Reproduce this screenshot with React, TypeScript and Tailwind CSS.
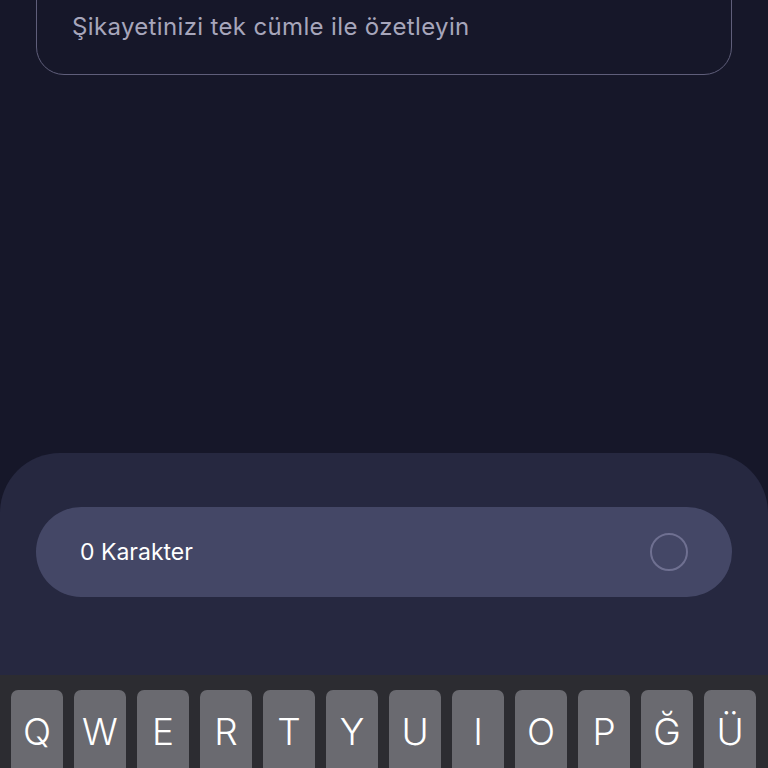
import React from 'react';

const keys = ['Q', 'W', 'E', 'R', 'T', 'Y', 'U', 'I', 'O', 'P', 'Ğ', 'Ü'];

const SummaryInput = () => (
  <div className="px-[36px]">
    <div className="mt-[-30px] h-[105px] rounded-[28px] border-[1.5px] border-[#5f5e7a] pl-[35px] pt-[41px]">
      <span className="block text-[24px] leading-[30px] tracking-[0.35px] text-[#a7a6bb]">
        Şikayetinizi tek cümle ile özetleyin
      </span>
    </div>
  </div>
);

const CharCounter = ({ count }: { count: number }) => (
  <div className="h-[222px] rounded-t-[60px] bg-[#262840] px-[36px] pt-[54px]">
    <div className="flex h-[90px] items-center justify-between rounded-full bg-[#444766] pl-[44px] pr-[44px]">
      <span className="text-[23px] text-white">{count} Karakter</span>
      <div className="h-[38px] w-[38px] rounded-full border-[2.5px] border-[#6f7091]" />
    </div>
  </div>
);

const KeyboardRow = () => (
  <div className="h-[93px] overflow-hidden bg-[#2c2c31] px-[11px] pt-[15px]">
    <div className="flex gap-[11px]">
      {keys.map((k) => (
        <div
          key={k}
          className="flex h-[84px] w-[52px] shrink-0 items-start justify-center rounded-[7px] bg-[#6a6a70] pt-[18px]"
        >
          <span className="text-[37px] font-light leading-[48px] text-white">
            {k}
          </span>
        </div>
      ))}
    </div>
  </div>
);

export default function App() {
  return (
    <div
      className="flex h-[768px] w-[768px] flex-col overflow-hidden bg-[#161729]"
      style={{ fontFamily: 'Inter, "Noto Sans", sans-serif' }}
    >
      <SummaryInput />
      <div className="flex-1" />
      <CharCounter count={0} />
      <KeyboardRow />
    </div>
  );
}
